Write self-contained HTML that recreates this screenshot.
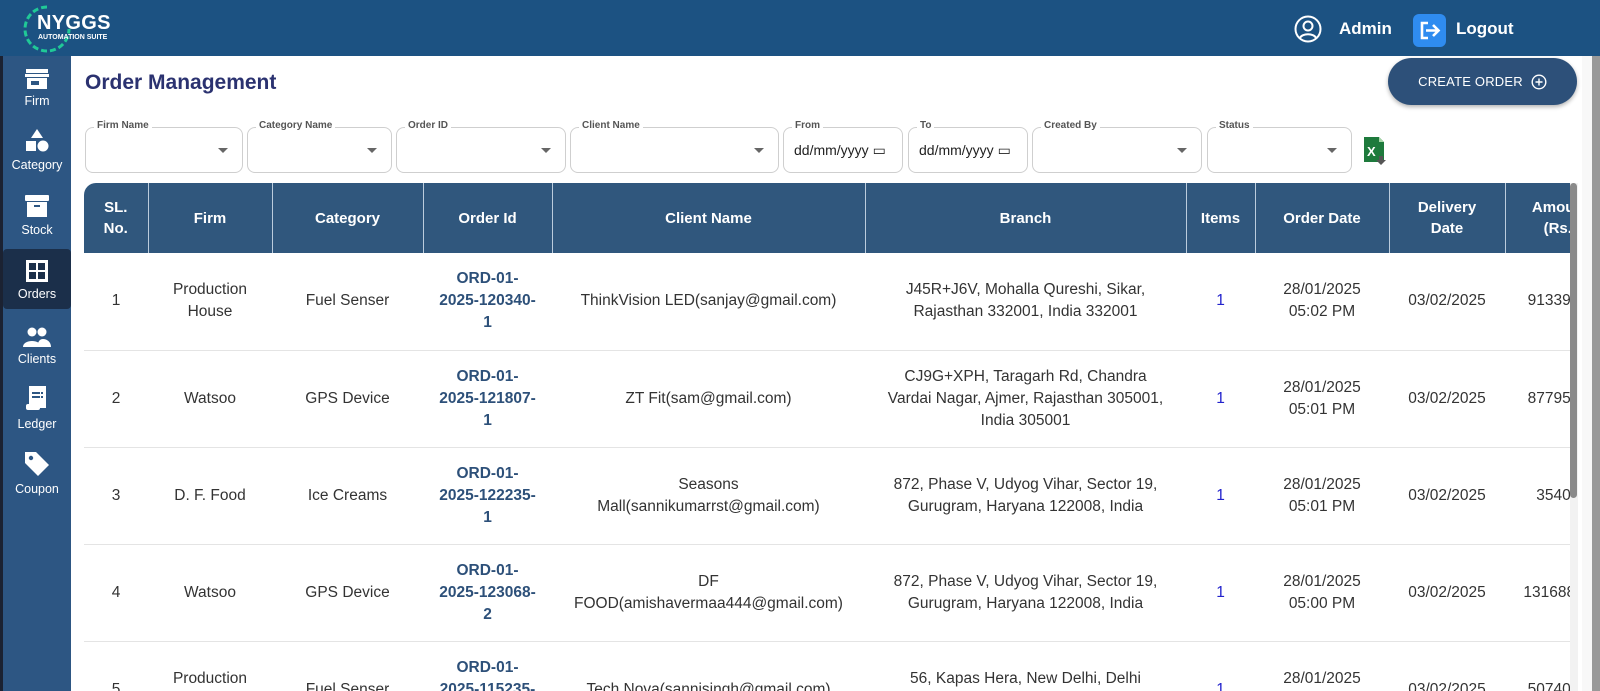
<!DOCTYPE html>
<html><head><meta charset="utf-8"><style>
*{box-sizing:border-box;margin:0;padding:0}
body{width:1600px;height:691px;overflow:hidden;background:#fff;font-family:"Liberation Sans",sans-serif;position:relative}
.top{position:absolute;left:0;top:0;width:1600px;height:56px;background:#1c5282}
.side{position:absolute;left:0;top:56px;width:71px;height:635px;background:#2d5683;border-left:3px solid #1b2232}
.si{position:absolute;left:0;width:68px;text-align:center;color:#fff;font-size:12.5px}
.si svg{display:block;margin:0 auto 4px}
.act{background:#1b2f4a;border-radius:4px}
.title{position:absolute;left:85px;top:71px;font-size:21px;font-weight:bold;color:#2b3270}
.btn{position:absolute;left:1388px;top:58px;width:189px;height:47px;border-radius:24px;background:#2d5079;color:#fff;font-size:13px;display:flex;align-items:center;justify-content:center;gap:8px;box-shadow:0 2px 4px rgba(0,0,0,.3);letter-spacing:.2px}
.f{position:absolute;top:127px;height:46px;border:1px solid #cfcfcf;border-radius:8px}
.f .l{position:absolute;top:-8px;left:8px;background:#fff;padding:0 3px;font-size:10px;color:#555;font-weight:bold}
.f .a{position:absolute;right:14px;top:20px;width:0;height:0;border-left:5px solid transparent;border-right:5px solid transparent;border-top:5px solid #666}
.f .d{position:absolute;left:10px;top:14px;font-size:14px;color:#222}
.tw{position:absolute;left:84px;top:183px;width:1486px;height:508px;overflow:hidden}
table{border-collapse:collapse;table-layout:fixed;width:1531px}
th{background:#30577d;color:#fff;font-size:15px;font-weight:bold;height:70px;border-left:1px solid #bcd;line-height:21px}
th:first-child{border-left:none;border-top-left-radius:12px}
td{height:97px;text-align:center;font-size:15.5px;color:#333;line-height:22px;border-bottom:1px solid #e4e4e4;padding:0 6px}
td.o{color:#2d5079;font-weight:bold}
td.i{color:#2222cc}
</style></head><body>
<div class="top">
 <svg style="position:absolute;left:22px;top:4px" width="50" height="50" viewBox="0 0 50 50"><path d="M25 3 A22 22 0 1 0 47 25" fill="none" stroke="#20c997" stroke-width="3" stroke-dasharray="6 3"/></svg>
 <div style="position:absolute;left:37px;top:12px;color:#fff;font-weight:bold;font-size:20px;letter-spacing:.3px">NYGGS</div>
 <div style="position:absolute;left:38px;top:34px;color:#fff;font-weight:bold;font-size:7px">AUTOMATION SUITE</div>
 <svg style="position:absolute;left:1294px;top:15px" width="28" height="28" viewBox="0 0 28 28"><circle cx="14" cy="14" r="12.5" fill="none" stroke="#fff" stroke-width="2"/><circle cx="14" cy="11" r="4.5" fill="none" stroke="#fff" stroke-width="2"/><path d="M6 23c2-5 14-5 16 0" fill="none" stroke="#fff" stroke-width="2"/></svg>
 <div style="position:absolute;left:1339px;top:19px;color:#fff;font-weight:bold;font-size:17px">Admin</div>
 <div style="position:absolute;left:1413px;top:14px;width:33px;height:33px;background:#2f8cf0;border-radius:6px"><svg width="33" height="33" viewBox="0 0 33 33"><path d="M15 9H9v15h6M13 16.5h12M20 11l5.5 5.5L20 22" fill="none" stroke="#fff" stroke-width="2.6"/></svg></div>
 <div style="position:absolute;left:1456px;top:19px;color:#fff;font-weight:bold;font-size:17px">Logout</div>
</div>
<div class="side">
 <div class="si" style="top:12px"><svg width="26" height="22" viewBox="0 0 26 22"><rect x="2" y="1" width="22" height="4" fill="#fff"/><path d="M1 6h24v3H1z" fill="#fff"/><rect x="3" y="10" width="20" height="11" fill="#fff"/><rect x="7" y="13" width="8" height="4" fill="#2d5683"/></svg>Firm</div>
 <div class="si" style="top:72px"><svg width="26" height="26" viewBox="0 0 26 26"><path d="M13 1l6 9H7z" fill="#fff"/><rect x="2" y="13" width="10" height="10" fill="#fff"/><circle cx="19" cy="18" r="5.5" fill="#fff"/></svg>Category</div>
 <div class="si" style="top:137px"><svg width="26" height="26" viewBox="0 0 26 26"><rect x="1" y="2" width="24" height="6" rx="1" fill="#fff"/><rect x="3" y="9" width="20" height="15" fill="#fff"/><rect x="10" y="12" width="6" height="2" fill="#2d5683"/></svg>Stock</div>
 <div class="si act" style="top:193px;height:60px;padding-top:10px"><svg width="24" height="24" viewBox="0 0 24 24"><rect x="1" y="1" width="22" height="22" fill="#fff"/><rect x="4" y="4" width="7" height="7" fill="#1b2f4a"/><rect x="13" y="4" width="7" height="7" fill="#1b2f4a"/><rect x="4" y="13" width="7" height="7" fill="#1b2f4a"/><rect x="13" y="13" width="7" height="7" fill="#1b2f4a"/></svg>Orders</div>
 <div class="si" style="top:270px"><svg width="30" height="22" viewBox="0 0 30 22"><circle cx="10" cy="6" r="4.5" fill="#fff"/><circle cx="20" cy="6" r="4.5" fill="#fff"/><path d="M1 21c0-8 18-8 18 0zM15 21c1-6 3-8 6-8 4 0 8 3 8 8z" fill="#fff"/></svg>Clients</div>
 <div class="si" style="top:329px"><svg width="24" height="28" viewBox="0 0 24 28"><rect x="4" y="1" width="17" height="22" fill="#fff"/><rect x="1" y="19" width="14" height="6" rx="2" fill="#fff"/><rect x="7" y="7" width="8" height="2" fill="#2d5683"/><rect x="7" y="11" width="8" height="2" fill="#2d5683"/><rect x="16" y="7" width="2" height="2" fill="#2d5683"/><rect x="16" y="11" width="2" height="2" fill="#2d5683"/></svg>Ledger</div>
 <div class="si" style="top:394px"><svg width="28" height="28" viewBox="0 0 28 28"><path d="M2 2h11l13 13-11 11L2 13z" fill="#fff"/><circle cx="8" cy="8" r="2.2" fill="#2d5683"/></svg>Coupon</div>
</div>
<div style="position:absolute;left:1592px;top:56px;width:8px;height:635px;background:#999"></div>
<div style="position:absolute;left:1582px;top:56px;width:10px;height:635px;background:#f8f8f8"></div>
<div class="title">Order Management</div>
<div class="btn">CREATE ORDER <svg width="16" height="16" viewBox="0 0 16 16"><circle cx="8" cy="8" r="6.8" fill="none" stroke="#fff" stroke-width="1.4"/><path d="M8 4.5v7M4.5 8h7" stroke="#fff" stroke-width="1.4"/></svg></div>
<div class="f" style="left:85px;width:158px"><span class="l">Firm Name</span><i class="a"></i></div>
<div class="f" style="left:247px;width:145px"><span class="l">Category Name</span><i class="a"></i></div>
<div class="f" style="left:396px;width:170px"><span class="l">Order ID</span><i class="a"></i></div>
<div class="f" style="left:570px;width:209px"><span class="l">Client Name</span><i class="a"></i></div>
<div class="f" style="left:783px;width:120px"><span class="l">From</span><span class="d">dd/mm/yyyy ▭</span></div>
<div class="f" style="left:908px;width:120px"><span class="l">To</span><span class="d">dd/mm/yyyy ▭</span></div>
<div class="f" style="left:1032px;width:170px"><span class="l">Created By</span><i class="a"></i></div>
<div class="f" style="left:1207px;width:145px"><span class="l">Status</span><i class="a"></i></div>
<svg style="position:absolute;left:1363px;top:136px" width="26" height="30" viewBox="0 0 26 30"><path d="M1 1h15l5 5v20H1z" fill="#1e7a3c"/><path d="M16 1v5h5" fill="#a5d6a7"/><text x="4" y="20" fill="#fff" font-family="Liberation Sans" font-weight="bold" font-size="13">X</text><path d="M16 20h4v4h3l-5 5-5-5h3z" fill="#555"/></svg>
<div class="tw"><table>
<colgroup><col style="width:64px"><col style="width:124px"><col style="width:151px"><col style="width:129px"><col style="width:313px"><col style="width:321px"><col style="width:69px"><col style="width:134px"><col style="width:116px"><col style="width:110px"></colgroup>
<tr><th>SL.<br>No.</th><th>Firm</th><th>Category</th><th>Order Id</th><th>Client Name</th><th>Branch</th><th>Items</th><th>Order Date</th><th>Delivery<br>Date</th><th>Amount<br>(Rs.)</th></tr>
<tr><td>1</td><td>Production<br>House</td><td>Fuel Senser</td><td class="o">ORD-01-<br>2025-120340-<br>1</td><td>ThinkVision LED(sanjay@gmail.com)</td><td>J45R+J6V, Mohalla Qureshi, Sikar,<br>Rajasthan 332001, India 332001</td><td class="i">1</td><td>28/01/2025<br>05:02 PM</td><td>03/02/2025</td><td>91339.00</td></tr>
<tr><td>2</td><td>Watsoo</td><td>GPS Device</td><td class="o">ORD-01-<br>2025-121807-<br>1</td><td>ZT Fit(sam@gmail.com)</td><td>CJ9G+XPH, Taragarh Rd, Chandra<br>Vardai Nagar, Ajmer, Rajasthan 305001,<br>India 305001</td><td class="i">1</td><td>28/01/2025<br>05:01 PM</td><td>03/02/2025</td><td>87795.00</td></tr>
<tr><td>3</td><td>D. F. Food</td><td>Ice Creams</td><td class="o">ORD-01-<br>2025-122235-<br>1</td><td>Seasons<br>Mall(sannikumarrst@gmail.com)</td><td>872, Phase V, Udyog Vihar, Sector 19,<br>Gurugram, Haryana 122008, India</td><td class="i">1</td><td>28/01/2025<br>05:01 PM</td><td>03/02/2025</td><td>&nbsp;&nbsp;3540.00</td></tr>
<tr><td>4</td><td>Watsoo</td><td>GPS Device</td><td class="o">ORD-01-<br>2025-123068-<br>2</td><td>DF<br>FOOD(amishavermaa444@gmail.com)</td><td>872, Phase V, Udyog Vihar, Sector 19,<br>Gurugram, Haryana 122008, India</td><td class="i">1</td><td>28/01/2025<br>05:00 PM</td><td>03/02/2025</td><td>131688.00</td></tr>
<tr><td>5</td><td>Production<br>House</td><td>Fuel Senser</td><td class="o">ORD-01-<br>2025-115235-<br>1</td><td>Tech Nova(sannisingh@gmail.com)</td><td>56, Kapas Hera, New Delhi, Delhi<br>110037, India</td><td class="i">1</td><td>28/01/2025<br>04:59 PM</td><td>03/02/2025</td><td>50740.00</td></tr>
</table></div>
<div style="position:absolute;left:1570px;top:183px;width:8px;height:508px;background:#f2f2f2"></div>
<div style="position:absolute;left:1570px;top:183px;width:7px;height:315px;background:#8a8a8a;border-radius:4px"></div>
</body></html>
